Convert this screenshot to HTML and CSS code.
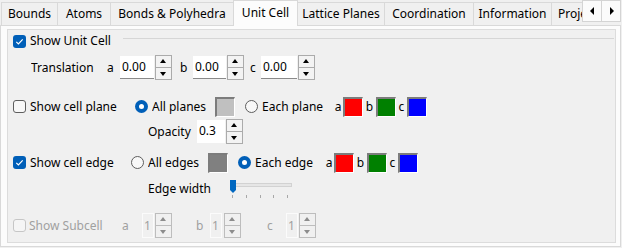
FILE: index.html
```html
<!DOCTYPE html>
<html>
<head>
<meta charset="utf-8">
<link rel="stylesheet" href="styles.css">
</head>
<body>
<div class="tabbar">
  <div class="tabs">
    <div class="tab">Bounds</div>
    <div class="tab">Atoms</div>
    <div class="tab">Bonds &amp; Polyhedra</div>
    <div class="tab active">Unit Cell</div>
    <div class="tab">Lattice Planes</div>
    <div class="tab">Coordination</div>
    <div class="tab">Information</div>
    <div class="tab">Projection</div>
  </div>
  <div class="scrollbtns">
    <div class="sbtn"><svg width="5" height="8" viewBox="0 0 5 8"><polygon points="4,0 4,8 0,4" fill="#000"/></svg></div>
    <div class="sbtn"><svg width="5" height="8" viewBox="0 0 5 8"><polygon points="1,0 1,8 5,4" fill="#000"/></svg></div>
  </div>
</div>
<div class="pane">
  <div class="frame">
    <div class="group-head">
      <span class="check on"><svg width="13" height="13" viewBox="0 0 13 13"><path d="M3.3 6.8 L5.4 8.9 L9.7 4.4" fill="none" stroke="#fff" stroke-width="1.2"/></svg></span>
      <span class="title">Show Unit Cell</span>
      <span class="gline"></span>
    </div>

    <div class="row r-trans">
      <span class="lbl w-trans">Translation</span>
      <span class="ax w13">a</span>
      <div class="spin"><div class="field fw34">0.00</div><div class="btns"><div class="up"></div><div class="down"></div></div></div>
      <span class="ax w13 ml8">b</span>
      <div class="spin"><div class="field fw33">0.00</div><div class="btns"><div class="up"></div><div class="down"></div></div></div>
      <span class="ax w11 ml6">c</span>
      <div class="spin"><div class="field fw36">0.00</div><div class="btns"><div class="up"></div><div class="down"></div></div></div>
    </div>

    <div class="row r-plane">
      <span class="check"></span>
      <span class="lbl ml4 w105">Show cell plane</span>
      <span class="radio on"></span>
      <span class="lbl ml4 w63">All planes</span>
      <span class="swatch sw-light"></span>
      <span class="radio ml10"></span>
      <span class="lbl ml4 w71">Each plane</span>
      <span class="ax w10c">a</span>
      <span class="swatch sw-red"></span>
      <span class="ax w13c">b</span>
      <span class="swatch sw-green"></span>
      <span class="ax w11c">c</span>
      <span class="swatch sw-blue"></span>
    </div>

    <div class="row r-opacity">
      <span class="lbl ml140 w49">Opacity</span>
      <div class="spin"><div class="field fw28 plain">0.3</div><div class="btns"><div class="up"></div><div class="down"></div></div></div>
    </div>

    <div class="row r-edge">
      <span class="check on"><svg width="13" height="13" viewBox="0 0 13 13"><path d="M3.3 6.8 L5.4 8.9 L9.7 4.4" fill="none" stroke="#fff" stroke-width="1.2"/></svg></span>
      <span class="lbl ml4 w101">Show cell edge</span>
      <span class="radio"></span>
      <span class="lbl ml4 w60">All edges</span>
      <span class="swatch sw-gray"></span>
      <span class="radio on ml10"></span>
      <span class="lbl ml4 w69">Each edge</span>
      <span class="ax w10c">a</span>
      <span class="swatch sw-red"></span>
      <span class="ax w13c">b</span>
      <span class="swatch sw-green"></span>
      <span class="ax w11c">c</span>
      <span class="swatch sw-blue"></span>
    </div>

    <div class="row r-width">
      <span class="lbl ml140 w82">Edge width</span>
      <svg class="slider" width="64" height="21" viewBox="0 0 64 21">
        <rect x="0.5" y="5.5" width="61" height="3" fill="#e6e6e6" stroke="#d2d2d2"/>
        <path d="M0 2 H6 V12 L3 15 L0 12 Z" fill="#0067c0"/>
        <g stroke="#a8a8a8" stroke-width="1">
          <line x1="2.5" y1="17" x2="2.5" y2="20"/>
          <line x1="16.5" y1="17" x2="16.5" y2="20"/>
          <line x1="30.5" y1="17" x2="30.5" y2="20"/>
          <line x1="43.5" y1="17" x2="43.5" y2="20"/>
          <line x1="57.5" y1="17" x2="57.5" y2="20"/>
        </g>
      </svg>
    </div>

    <div class="row r-sub">
      <span class="check dis"></span>
      <span class="lbl ml3 w93 distext">Show Subcell</span>
      <span class="ax w20 distext">a</span>
      <div class="spin dspin"><div class="field fw12">1</div><div class="btns"><div class="up"></div><div class="down"></div></div></div>
      <span class="ax w38 pl24 distext">b</span>
      <div class="spin dspin g2"><div class="field fw12">1</div><div class="btns"><div class="up"></div><div class="down"></div></div></div>
      <span class="ax w45 pl26 distext">c</span>
      <div class="spin dspin"><div class="field fw12">1</div><div class="btns"><div class="up"></div><div class="down"></div></div></div>
    </div>
  </div>
</div>
</body>
</html>
```

FILE: styles.css
```css
html, body {
  margin: 0;
  padding: 0;
}
body {
  width: 622px;
  height: 248px;
  overflow: hidden;
  background: #f0f0f0;
  font-family: "Noto Sans", "DejaVu Sans", sans-serif;
  font-size: 12px;
  line-height: 16px;
  color: #000;
}

/* ---------- tab bar ---------- */
.tabbar {
  height: 25px;
  display: flex;
  position: relative;
  z-index: 1;
}
.tabs {
  flex: none;
  width: 582px;
  height: 26px;
  box-sizing: border-box;
  padding-left: 1px;
  display: flex;
  align-items: flex-start;
  overflow: hidden;
}
.tab {
  flex: none;
  box-sizing: border-box;
  height: 23px;
  margin-top: 2px;
  margin-right: -1px;
  border: 1px solid #d9d9d9;
  border-bottom: none;
  background: #f0f0f0;
  text-align: center;
  line-height: 22px;
  white-space: nowrap;
  overflow: hidden;
}
.tab:nth-child(1) { width: 57px; }
.tab:nth-child(2) { width: 54px; }
.tab:nth-child(3) { width: 124px; }
.tab:nth-child(4) { width: 65px; }
.tab:nth-child(5) { width: 88px; }
.tab:nth-child(6) { width: 90px; }
.tab:nth-child(7) { width: 79px; }
.tab:nth-child(8) { width: 90px; text-align: left; padding-left: 6px; }
.tab.active {
  height: 26px;
  margin-top: 0;
  line-height: 23px;
  background: #fcfcfc;
  position: relative;
  z-index: 2;
}
.scrollbtns {
  display: flex;
  height: 22px;
}
.sbtn {
  width: 20px;
  height: 22px;
  box-sizing: border-box;
  border: 1px solid #d4d4d4;
  background: #fbfbfb;
  display: flex;
  align-items: center;
  justify-content: center;
}
.sbtn + .sbtn { margin-left: -1px; }

/* ---------- pane ---------- */
.pane {
  width: 621px;
  height: 222px;
  box-sizing: border-box;
  border: 1px solid #d9d9d9;
  background: #fcfcfc;
  padding: 3px 0 0 6px;
  position: relative;
  z-index: 0;
}
.frame {
  width: 609px;
  height: 214px;
  box-sizing: border-box;
  border: 1px solid #dcdcdc;
  background: #f0f0f0;
  display: flex;
  flex-direction: column;
}

.group-head {
  margin-top: 4px;
  height: 14px;
  display: flex;
  align-items: center;
  padding-left: 5px;
}
.group-head .title {
  margin-left: 4px;
  width: 93px;
  white-space: nowrap;
}
.gline {
  flex: 1;
  align-self: flex-start;
  height: 1px;
  margin-top: 4px;
  margin-right: 1px;
  background: #d6d6d6;
}

.row {
  display: flex;
  align-items: center;
  flex: none;
}
.r-trans { margin-top: 7px; height: 25px; }
.r-plane { margin-top: 16px; height: 21px; padding-left: 5px; }
.r-opacity { margin-top: 2px; height: 25px; }
.r-edge { margin-top: 8px; height: 21px; padding-left: 5px; }
.r-width { margin-top: 5px; height: 21px; }
.r-sub { margin-top: 14px; height: 25px; padding-left: 5px; }

.lbl { flex: none; white-space: nowrap; overflow: hidden; }
.w-trans { margin-left: 23px; width: 76px; }
.ax { flex: none; }
.w13 { width: 13px; }
.w11 { width: 11px; }
.w10c { width: 10px; text-align: center; }
.w13c { width: 13px; text-align: center; }
.w11c { width: 11px; text-align: center; }
.w20 { width: 20px; }
.w38 { width: 38px; box-sizing: border-box; }
.w45 { width: 45px; box-sizing: border-box; }
.pl24 { padding-left: 24px; }
.pl26 { padding-left: 26px; }
.ml3 { margin-left: 3px; }
.ml4 { margin-left: 4px; }
.ml6 { margin-left: 6px; }
.ml8 { margin-left: 8px; }
.ml10 { margin-left: 10px; }
.ml140 { margin-left: 140px; }
.w105 { width: 105px; }
.w101 { width: 101px; }
.w93 { width: 93px; }
.w82 { width: 82px; }
.w71 { width: 71px; }
.w69 { width: 69px; }
.w63 { width: 63px; }
.w60 { width: 60px; }
.w49 { width: 49px; }
.distext { color: #a0a0a0; }

/* ---------- checkbox / radio ---------- */
.check {
  flex: none;
  width: 13px;
  height: 13px;
  box-sizing: border-box;
  border: 1px solid #5e5e5e;
  border-radius: 3px;
  background: #f8f8f8;
  position: relative;
}
.check.on {
  border: none;
  background: #005fb8;
}
.check svg { display: block; }
.check.dis {
  border-color: #c6c6c6;
  background: #f5f5f5;
}
.radio {
  flex: none;
  width: 13px;
  height: 13px;
  box-sizing: border-box;
  border: 1px solid #5e5e5e;
  border-radius: 50%;
  background: #f8f8f8;
  position: relative;
}
.radio.on {
  border: none;
  background: #005fb8;
}
.radio.on::after {
  content: "";
  position: absolute;
  left: 4px;
  top: 4px;
  width: 5px;
  height: 5px;
  border-radius: 50%;
  background: #fff;
}

/* ---------- colour swatches ---------- */
.swatch {
  flex: none;
  width: 20px;
  height: 20px;
  box-sizing: border-box;
  border-style: solid;
  border-width: 2px 1px 1px 2px;
  border-color: #7c7c7c #ffffff #ffffff #7c7c7c;
}
.sw-light { background: #c0c0c0; }
.sw-gray { background: #808080; }
.sw-red { background: #ff0000; }
.sw-green { background: #008000; }
.sw-blue { background: #0000ff; }

/* ---------- spin boxes ---------- */
.spin {
  flex: none;
  display: flex;
  align-items: center;
  gap: 1px;
}
.spin.g2 { gap: 2px; }
.field {
  height: 23px;
  box-sizing: border-box;
  background: #fff;
  border-bottom: 1px solid #8a8a8a;
  padding-left: 2px;
  line-height: 22px;
  white-space: nowrap;
  overflow: hidden;
}
.field.plain { border-bottom-color: #fff; }
.fw12 { width: 12px; }
.fw28 { width: 28px; }
.fw33 { width: 33px; }
.fw34 { width: 34px; }
.fw36 { width: 36px; }
.btns {
  width: 17px;
  display: flex;
  flex-direction: column;
}
.up, .down {
  height: 13px;
  box-sizing: border-box;
  border: 1px solid #ababab;
  background: #f3f3f3;
  position: relative;
}
.down { margin-top: -1px; }
.up::after, .down::after {
  content: "";
  position: absolute;
  left: 4px;
  width: 0;
  height: 0;
  border-left: 3.5px solid transparent;
  border-right: 3.5px solid transparent;
}
.up::after {
  top: 3px;
  border-bottom: 4px solid #000;
}
.down::after {
  top: 4px;
  border-top: 4px solid #000;
}

.dspin .field {
  height: 25px;
  line-height: 23px;
  background: #f0f0f0;
  border: 1px solid #fbfbfb;
  padding-left: 1px;
  color: #a0a0a0;
}
.dspin .up, .dspin .down {
  border-color: #bdbdbd;
  background: #f0f0f0;
}
.dspin .up::after { border-bottom-color: #8c8c8c; }
.dspin .down::after { border-top-color: #8c8c8c; }

.slider { flex: none; display: block; }
```
